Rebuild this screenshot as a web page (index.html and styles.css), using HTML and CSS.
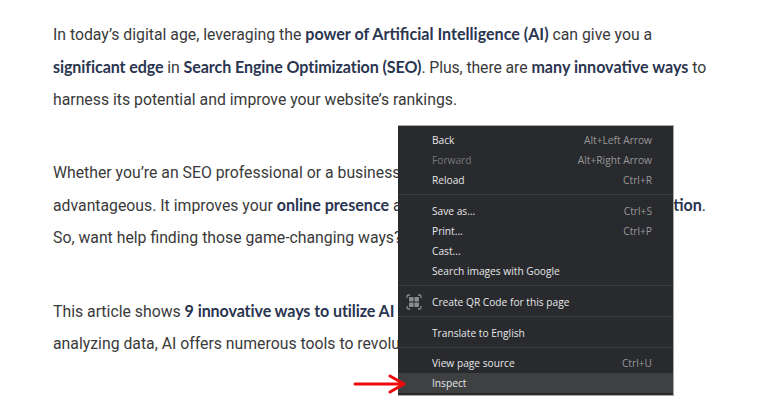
FILE: index.html
```html
<!DOCTYPE html>
<html lang="en">
<head>
<meta charset="utf-8">
<title>AI and SEO</title>
<link rel="stylesheet" href="styles.css">
</head>
<body>
<main class="article">
  <p>In today’s digital age, leveraging the <b>power of Artificial Intelligence (AI)</b> can give you a<br>
  <span class="snug"><b>significant edge</b> in <b>Search Engine Optimization (SEO)</b>. Plus, there are</span> <b>many innovative ways</b> to<br>
  harness its potential and improve your website’s rankings.</p>
  <p>Whether you’re an SEO professional or a business owner, using AI can be highly<br>
  <span class="split"><span>advantageous. It improves your <b>online presence</b> and helps you</span><span><b>beat the competition</b>.</span></span>
  <span class="last">So, want help finding those game-changing ways?</span></p>
  <p>This article shows <b class="snug">9 innovative ways to utilize AI</b> for SEO, from creating content to<br>
  analyzing data, AI offers numerous tools to revolutionize your strategy.</p>
</main>
<nav class="menu">
  <div class="group">
    <div class="item"><span>Back</span><span class="key">Alt+Left Arrow</span></div>
    <div class="item off"><span>Forward</span><span class="key">Alt+Right Arrow</span></div>
    <div class="item"><span>Reload</span><span class="key">Ctrl+R</span></div>
  </div>
  <div class="group">
    <div class="item"><span>Save as...</span><span class="key">Ctrl+S</span></div>
    <div class="item"><span>Print...</span><span class="key">Ctrl+P</span></div>
    <div class="item"><span>Cast...</span></div>
    <div class="item"><span>Search images with Google</span></div>
  </div>
  <div class="group">
    <div class="item">
      <svg class="qr" viewBox="0 0 16 16" width="16" height="16" aria-hidden="true">
        <path d="M1 4V2.500A1.500 1.500 0 0 1 2.500 1H4M12 1h1.500A1.500 1.500 0 0 1 15 2.500V4M15 12v1.500a1.500 1.500 0 0 1-1.500 1.500H12M4 15H2.500A1.500 1.500 0 0 1 1 13.500V12" fill="none" stroke="#8a8b8d" stroke-width="1.300"/>
        <rect x="3" y="3" width="4.600" height="4.600" rx=".8" fill="#8a8b8d"/>
        <rect x="8.400" y="3" width="4.600" height="4.600" rx=".8" fill="#8a8b8d"/>
        <rect x="3" y="8.400" width="4.600" height="4.600" rx=".8" fill="#8a8b8d"/>
        <rect x="8.400" y="8.400" width="4.600" height="4.600" rx=".8" fill="#8a8b8d"/>
      </svg>
      <span>Create QR Code for this page</span>
    </div>
  </div>
  <div class="group tight">
    <div class="item"><span>Translate to English</span></div>
  </div>
  <div class="group">
    <div class="item"><span>View page source</span><span class="key">Ctrl+U</span></div>
    <div class="item active"><span>Inspect</span></div>
  </div>
</nav>
<svg class="arrow" viewBox="0 0 54 20" width="54" height="20" aria-hidden="true">
  <path d="M2 10H49" stroke="#ee0a0a" stroke-width="3" stroke-linecap="round" fill="none"/>
  <path d="M37 2L51 10L37 18" stroke="#ee0a0a" stroke-width="3" stroke-linecap="round" stroke-linejoin="round" fill="none"/>
</svg>
</body>
</html>
```

FILE: styles.css
```css
html, body {
  margin: 0;
  height: 406px;
  overflow: hidden;
  background: #fff;
}
.article {
  padding: 18px 0 0 53px;
  width: 690px;
  font: 15.800px/32.200px Roboto, sans-serif;
  color: #3a3a3a;
  white-space: nowrap;
}
.article p {
  margin: 0 0 40.400px;
}
.article b {
  font-family: Lato, sans-serif;
  font-size: 16.100px;
  font-weight: 700;
  color: #2a3550;
}
.article .snug {
  letter-spacing: -0.100px;
}
.split {
  display: flex;
  justify-content: space-between;
  width: 653px;
}
.last {
  display: block;
}
.menu {
  position: absolute;
  left: 398px;
  top: 125px;
  width: 276px;
  height: 271px;
  box-sizing: border-box;
  padding-top: 4px;
  background: #292a2d;
  border: 1px solid #a9aaac;
  border-left: 0;
  font: 10.200px "Open Sans", sans-serif;
  color: #e6e7e9;
}
.group {
  padding: 0 0 4px;
  margin-bottom: 6px;
  border-bottom: 1px solid #3c3d40;
}
.tight {
  margin-bottom: 5px;
}
.group:last-child {
  border-bottom: 0;
  margin: 0;
}
.item {
  display: flex;
  align-items: center;
  justify-content: space-between;
  position: relative;
  height: 20px;
  padding: 0 21px 0 34px;
}
.off {
  color: #77787b;
}
.key {
  color: #97989b;
}
.active {
  background: #3f4042;
}
.qr {
  position: absolute;
  left: 8px;
  top: 2px;
}
.arrow {
  position: absolute;
  left: 353px;
  top: 374px;
}
```
